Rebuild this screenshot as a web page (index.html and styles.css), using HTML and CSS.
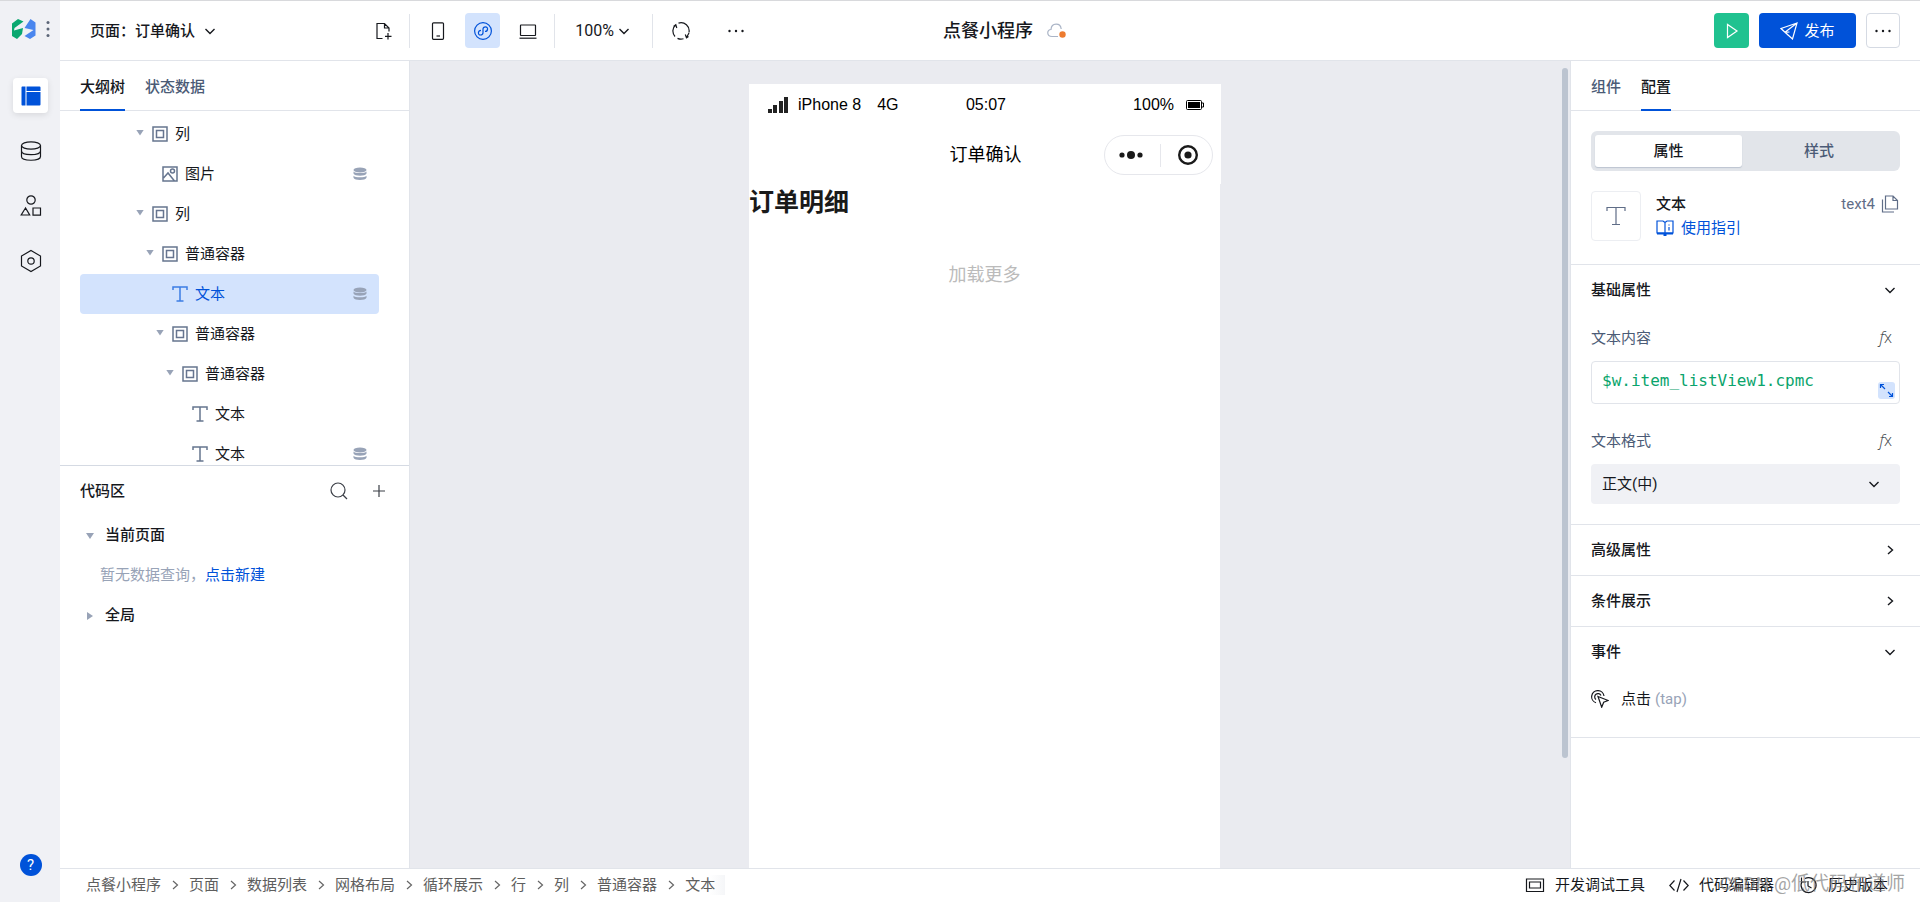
FILE: index.html
```html
<!DOCTYPE html>
<html lang="zh-CN">
<head>
<meta charset="utf-8">
<title>点餐小程序</title>
<link rel="stylesheet" href="styles.css">
</head>
<body>
<svg class="sprite" aria-hidden="true">
  <symbol id="i-down" viewBox="0 0 12 12"><path d="M1.5 4 6 8.5 10.500 4"/></symbol>
  <symbol id="i-right" viewBox="0 0 12 12"><path d="M4 2 8.500 6 4 10"/></symbol>
  <symbol id="i-box" viewBox="0 0 16 16"><path d="M1 1h14v14H1zM4.500 4.500h7v7h-7z"/></symbol>
  <symbol id="i-text" viewBox="0 0 16 16"><path d="M1 4V1h14v3M8 1v14M4.500 15h7"/></symbol>
  <symbol id="i-image" viewBox="0 0 16 16"><path d="M1 1h14v14H1zM1.500 12 6 7l6.500 8"/><circle cx="10.500" cy="5" r="2"/></symbol>
  <symbol id="i-data" viewBox="0 0 14 14"><g fill="currentColor" stroke="none"><ellipse cx="7" cy="3" rx="6.500" ry="2.500"/><path d="M.5 4.500C2 6.500 12 6.500 13.500 4.500v2c-1 3-12 3-13 0zM.5 8.700c1.500 2 11.500 2 13 0v2c-1 3-12 3-13 0z"/></g></symbol>
  <symbol id="i-more" viewBox="0 0 18 18"><g fill="currentColor" stroke="none"><circle cx="2.500" cy="9" r="1.200"/><circle cx="9" cy="9" r="1.200"/><circle cx="15.500" cy="9" r="1.200"/></g></symbol>
</svg>
<div class="app">
  <nav class="rail" aria-label="主导航">
    <div class="brand">
      <svg class="logo" viewBox="0 0 24 20"><path fill="#0aa870" d="M0 4.500 6 0l5.500 2.500L2.500 9l-.5 2.500 9-2.500-1 6-5 5L0 17z"/><path fill="#4a86ee" d="M18.500 0 23.500 3.500V16.500L18 20l-5.500-3 9-6-9-2z"/></svg>
      <svg class="grip" viewBox="0 0 4 18"><g fill="#5b6577"><circle cx="2" cy="2.500" r="1.500"/><circle cx="2" cy="9" r="1.500"/><circle cx="2" cy="15.500" r="1.500"/></g></svg>
    </div>
    <button class="rail-btn current" aria-label="页面"><svg class="i22" viewBox="0 0 22 22"><path fill="#0052d9" stroke="none" d="M2 1.500h3.500v19H2a1 1 0 0 1-.5-1v-17a1 1 0 0 1 .5-1z"/><path fill="#0052d9" stroke="none" d="M6.500 1.500h13a1 1 0 0 1 1 1V6h-14zM6.500 7h14v12.500a1 1 0 0 1-1 1h-13z"/></svg></button>
    <button class="rail-btn" aria-label="数据"><svg class="i22" viewBox="0 0 22 22"><ellipse cx="11" cy="5.500" rx="9.500" ry="3.700"/><path d="M1.500 5.500v11c0 5 19 5 19 0v-11M1.500 11c0 4.800 19 4.800 19 0"/></svg></button>
    <button class="rail-btn" aria-label="组件"><svg class="i22" viewBox="0 0 22 22"><circle cx="11" cy="5" r="4.200"/><path d="M5.500 13 1.200 20h8.500zM13 13h7.500v7.200H13z"/></svg></button>
    <button class="rail-btn" aria-label="设置"><svg class="i22 tall" viewBox="0 0 22 24"><path d="M11 1.500 20.500 7v10L11 22.500 1.500 17V7z"/><circle cx="11" cy="12" r="3.200"/></svg></button>
    <button class="help" aria-label="帮助">?</button>
  </nav>

  <div class="main">
    <header class="topbar">
      <button class="page-pick">页面：订单确认 <svg class="i12"><use href="#i-down"/></svg></button>
      <button class="tool add" aria-label="新建页面"><svg class="i18" viewBox="0 0 18 18"><path d="M7.500 16.500H2v-15h7.500L14 6v3.500M9.500 1.500V6H14M13 11v6.500M10 14.300h6.500"/></svg></button>
      <span class="rule"></span>
      <div class="devices">
        <button class="tool" aria-label="手机"><svg class="i18" viewBox="0 0 18 18"><rect x="3.500" y=".8" width="11" height="16.500" rx="1"/><path d="M7.500 14h3.500"/></svg></button>
        <button class="tool on" aria-label="小程序"><svg class="i18" viewBox="0 0 18 18"><circle cx="9" cy="9" r="8.400"/><path d="M7 8.300C3.800 8.300 3.500 13 6.500 13 8.200 13 9 12 9 10.800V7C9 5.800 9.800 4.800 11.500 4.800c3 0 2.700 4.500-.5 4.700"/></svg></button>
        <button class="tool" aria-label="电脑"><svg class="i18" viewBox="0 0 18 18"><rect x="1.500" y="3" width="15" height="10.500" rx=".5"/><path d="M.5 16.200h17"/></svg></button>
      </div>
      <span class="rule"></span>
      <button class="zoom">100% <svg class="i12"><use href="#i-down"/></svg></button>
      <span class="rule"></span>
      <button class="tool refresh" aria-label="刷新"><svg class="i18" viewBox="0 0 18 18"><path d="M6.500 1.100a8.200 8.200 0 0 1 10.500 9.400M11.500 16.800A8.200 8.200 0 0 1 5.500 16.400M3 14.500A8.200 8.200 0 0 1 3.500 3M1.500 4.500 3.800 2.800l1 3.200M16.500 14.500 14.500 15.800l-1.200-3.300M14.500 15.500 17 11"/></svg></button>
      <button class="tool" aria-label="更多"><svg class="i18"><use href="#i-more"/></svg></button>
      <div class="doc"><h1>点餐小程序</h1>
        <svg class="cloud" viewBox="0 0 20 16"><path d="M11 13.500H5C-.5 13.500-.5 6.500 4 6.500 4.500-.5 13.500-.5 14.200 6" stroke="#aab4c6"/><circle cx="15.500" cy="11.500" r="3.200" fill="#ed7b2f" stroke="none"/></svg></div>
      <div class="actions">
        <button class="run" aria-label="运行"><svg class="i18" viewBox="0 0 18 18"><path d="M4.500 2.500v13L14 9z"/></svg></button>
        <button class="publish"><svg class="i18" viewBox="0 0 18 18"><path d="M17 1 1 6.500l4 3.800L12.500 17zM17 1 5 10.300M5 10.300l4.500-.3M5.500 10.500l3 3"/></svg>发布</button>
        <button class="extra" aria-label="更多操作"><svg class="i18"><use href="#i-more"/></svg></button>
      </div>
    </header>

    <div class="work">
      <aside class="left">
        <div class="tabs"><button class="tab sel">大纲树</button><button class="tab">状态数据</button></div>
        <ul class="tree">
          <li class="row l1"><i class="tri"></i><svg class="i16"><use href="#i-box"/></svg>列</li>
          <li class="row l2"><i class="tri none"></i><svg class="i16"><use href="#i-image"/></svg>图片<svg class="bound"><use href="#i-data"/></svg></li>
          <li class="row l1"><i class="tri"></i><svg class="i16"><use href="#i-box"/></svg>列</li>
          <li class="row l2"><i class="tri"></i><svg class="i16"><use href="#i-box"/></svg>普通容器</li>
          <li class="row l3 picked"><i class="tri none"></i><svg class="i16"><use href="#i-text"/></svg>文本<svg class="bound"><use href="#i-data"/></svg></li>
          <li class="row l3"><i class="tri"></i><svg class="i16"><use href="#i-box"/></svg>普通容器</li>
          <li class="row l4"><i class="tri"></i><svg class="i16"><use href="#i-box"/></svg>普通容器</li>
          <li class="row l5"><i class="tri none"></i><svg class="i16"><use href="#i-text"/></svg>文本</li>
          <li class="row l5"><i class="tri none"></i><svg class="i16"><use href="#i-text"/></svg>文本<svg class="bound"><use href="#i-data"/></svg></li>
        </ul>
        <section class="code">
          <div class="code-head"><h2>代码区</h2>
            <button class="tool" aria-label="搜索"><svg class="i18" viewBox="0 0 18 18"><circle cx="8" cy="8" r="7"/><path d="m13 13 4 4"/></svg></button>
            <button class="tool" aria-label="新增"><svg class="i18" viewBox="0 0 18 18"><path d="M9 3v12M3 9h12"/></svg></button></div>
          <div class="group"><i class="tri"></i>当前页面</div>
          <p class="empty">暂无数据查询，<a href="#new">点击新建</a></p>
          <div class="group"><i class="tri shut"></i>全局</div>
        </section>
      </aside>

      <main class="canvas">
        <div class="phone">
          <div class="phone-top">
            <div class="status">
              <span class="net"><svg class="signal" viewBox="0 0 20 16"><path fill="#222" stroke="none" d="M0 12h4v4H0zM5 8h4v8H5zM11 4h4v12h-4zM16 0h4v16h-4z"/></svg>iPhone 8<span class="carrier">4G</span></span>
              <span>05:07</span>
              <span class="power">100%<svg class="battery" viewBox="0 0 18 10"><rect x=".5" y=".5" width="15" height="9" rx="1" stroke="#000"/><path d="M2 2h12v6H2z" fill="#000" stroke="none"/><path d="M16 3h1.500v4H16" stroke="#000"/></svg></span>
            </div>
            <div class="navbar"><span></span><span class="nav-title">订单确认</span>
              <span class="capsule"><svg viewBox="0 0 24 10" class="c-dots"><g fill="#1a1a1a" stroke="none"><circle cx="3" cy="5" r="2.600"/><circle cx="12" cy="5" r="4"/><circle cx="21" cy="5" r="2.600"/></g></svg><svg viewBox="0 0 20 20" class="c-close"><circle cx="10" cy="10" r="8.800" stroke="#1a1a1a" stroke-width="2.400"/><circle cx="10" cy="10" r="3.600" fill="#1a1a1a" stroke="none"/></svg></span></div>
          </div>
          <div class="phone-body"><h2>订单明细</h2><p>加载更多</p></div>
        </div>
        <div class="scroll"></div>
      </main>

      <aside class="right">
        <div class="tabs"><button class="tab">组件</button><button class="tab sel">配置</button></div>
        <div class="intro">
          <div class="segment"><button class="on">属性</button><button>样式</button></div>
          <div class="comp">
            <div class="thumb"><svg class="i20" viewBox="0 0 20 20"><path d="M1 5V1.500h18V5M10 1.500v17M6 18.500h8"/></svg></div>
            <div class="comp-name"><strong>文本</strong><a href="#guide"><svg class="i18" viewBox="0 0 18 18"><path d="M1 2h6l2 1.500L11 2h6v12H1zM9 3.500V14M13 5.500v1M13 8v3.500"/><path d="M1 14.500h16M7.500 16h3" stroke-width="2"/></svg>使用指引</a></div>
            <div class="comp-id">text4<button class="bare" aria-label="复制"><svg class="i18" viewBox="0 0 18 18"><path d="M4.500 1h7.500l4.500 4.500V14h-12zM12 1v4.500h4.500M1.500 4.500V17H13"/></svg></button></div>
          </div>
        </div>
        <section class="block basic">
          <button class="block-head">基础属性<svg class="i12"><use href="#i-down"/></svg></button>
          <div class="field"><label for="content">文本内容</label><button class="fx" aria-label="表达式"><i>f</i>x</button></div>
          <div class="expr"><input id="content" type="text" value="$w.item_listView1.cpmc"><button class="expand" aria-label="展开"><svg viewBox="0 0 17 17"><path d="M2.500 2.500 7 7M2.500 6V2.500H6M10 10l4.500 4.500M14.500 11v3.500H11"/></svg></button></div>
          <div class="field second"><label for="format">文本格式</label><button class="fx" aria-label="表达式"><i>f</i>x</button></div>
          <div class="pick"><select id="format"><option>正文(中)</option></select><svg class="i12"><use href="#i-down"/></svg></div>
        </section>
        <section class="block"><button class="block-head">高级属性<svg class="i12"><use href="#i-right"/></svg></button></section>
        <section class="block"><button class="block-head">条件展示<svg class="i12"><use href="#i-right"/></svg></button></section>
        <section class="block events"><button class="block-head">事件<svg class="i12"><use href="#i-down"/></svg></button>
          <div class="event"><svg class="i18" viewBox="0 0 18 18"><path d="M13 6A6.200 6.200 0 1 0 5 12.700M10 5.500A3.300 3.300 0 1 0 5 9.500M7 6.500 17.200 10.500l-4.500 1.700-2 5z"/></svg>点击 <span>(tap)</span></div></section>
      </aside>
    </div>

    <footer class="bottom">
      <nav class="crumbs" aria-label="路径"><a href="#1">点餐小程序</a><svg class="i12"><use href="#i-right"/></svg><a href="#2">页面</a><svg class="i12"><use href="#i-right"/></svg><a href="#3">数据列表</a><svg class="i12"><use href="#i-right"/></svg><a href="#4">网格布局</a><svg class="i12"><use href="#i-right"/></svg><a href="#5">循环展示</a><svg class="i12"><use href="#i-right"/></svg><a href="#6">行</a><svg class="i12"><use href="#i-right"/></svg><a href="#7">列</a><svg class="i12"><use href="#i-right"/></svg><a href="#8">普通容器</a><svg class="i12"><use href="#i-right"/></svg><a href="#9" class="last">文本</a></nav>
      <div class="utils">
        <button><svg class="i20" viewBox="0 0 20 20"><path d="M1.500 4h17v12.500h-17zM4.500 7h11v6h-11z"/></svg>开发调试工具</button>
        <button><svg class="i20" viewBox="0 0 20 20"><path d="M5.500 5.500.8 10.500l4.700 5M14.500 5.500l4.700 5-4.700 5M12 4 8 17"/></svg>代码编辑器</button>
        <button><svg class="i20" viewBox="0 0 20 20"><path d="M4 6.500a7.500 7.500 0 1 0 3-3M3.500 2.500v4.500H8M10 6v5l3.500 2"/></svg>历史版本</button>
      </div>
      <span class="mark">CSDN @低代码布道师</span>
    </footer>
  </div>
</div>
</body>
</html>
```

FILE: styles.css
```css
* { box-sizing: border-box; }
body { margin: 0; font: 15px/20px Roboto, "Noto Sans CJK SC", sans-serif; color: #16181d; background: #fff; }
h1, h2, p, ul { margin: 0; padding: 0; }
button, input, select { font: inherit; color: inherit; }
button { border: 0; padding: 0; background: none; display: flex; align-items: center; justify-content: center; cursor: pointer; }
a { color: #0052d9; text-decoration: none; }
svg { fill: none; stroke: currentColor; stroke-width: 1.2; flex: none; display: block; }
.sprite { position: absolute; width: 0; height: 0; }
.i12 { width: 12px; height: 12px; stroke-width: 1.4; }
.i16 { width: 16px; height: 16px; stroke-width: 1.5; }
.i18 { width: 18px; height: 18px; }
.i20 { width: 20px; height: 20px; }
.i22 { width: 22px; height: 22px; }
.i22.tall { height: 24px; }

.app { display: flex; height: 100vh; border-top: 1px solid #d8d9dc; }
.rail { width: 60px; background: #f0f1f5; display: flex; flex-direction: column; align-items: center; padding: 17px 0 26px 1px; }
.brand { display: flex; gap: 10px; align-items: center; height: 22px; margin-bottom: 38px; }
.logo { width: 24px; height: 20px; stroke: none; }
.grip { width: 4px; height: 18px; stroke: none; }
.rail-btn { width: 35px; height: 35px; margin-bottom: 20px; border-radius: 4px; }
.rail-btn.current { background: #fff; box-shadow: 0 2px 6px #0000001a; }
.help { width: 22px; height: 22px; margin-top: auto; border-radius: 50%; background: #0052d9; color: #fff; }

.main { flex: 1; min-width: 0; display: flex; flex-direction: column; }
.topbar { position: relative; height: 60px; border-bottom: 1px solid #e1e4ea; display: flex; align-items: center; padding: 0 20px 0 30px; }
.page-pick { font-weight: 500; gap: 9px; }
.tool { width: 35px; height: 35px; border-radius: 4px; }
.tool.on { background: #d3e3fd; color: #0052d9; }
.add { margin: 0 8px 0 150px; }
.rule { width: 1px; height: 34px; background: #e1e4ea; }
.devices { display: flex; gap: 10px; padding: 0 9px 0 10px; }
.zoom { width: 97px; gap: 4px; font-size: 16px; padding-right: 2px; }
.refresh { margin: 0 20px 0 10px; }
.doc { position: absolute; left: 50%; display: flex; align-items: center; gap: 14px; transform: translateX(-47px); }
.doc h1 { font-size: 18px; line-height: 24px; font-weight: 500; }
.cloud { width: 20px; height: 16px; }
.actions { margin-left: auto; display: flex; gap: 10px; }
.actions button { height: 35px; border-radius: 4px; }
.run { width: 35px; background: #20c290; color: #fff; }
.publish { width: 97px; background: #0052d9; color: #fff; gap: 6px; }
.extra { width: 34px; border: 1px solid #d5dae3; }

.work { flex: 1; min-height: 0; display: flex; }
.left { width: 350px; border-right: 1px solid #e1e4ea; display: flex; flex-direction: column; }
.tabs { display: flex; gap: 20px; height: 50px; padding: 0 20px; border-bottom: 1px solid #e1e4ea; flex: none; }
.tab { font-weight: 500; color: #4b5b76; height: 50px; padding-top: 4px; border-bottom: 2px solid transparent; }
.tab.sel { color: #16181d; border-color: #0052d9; }
.tree { list-style: none; height: 354px; padding: 3px 30px 0 20px; overflow: hidden; }
.row { height: 40px; display: flex; align-items: center; gap: 7px; border-radius: 4px; padding-right: 12px; }
.row .i16 { color: #66758f; }
.row.picked { background: #d3e3fd; color: #0052d9; }
.row.picked .i16 { color: #3d7de4; }
.l1 { padding-left: 56px; }
.l2 { padding-left: 66px; }
.l3 { padding-left: 76px; }
.l4 { padding-left: 86px; }
.l5 { padding-left: 96px; }
.tri { width: 8px; height: 6px; background: #98a3b7; clip-path: polygon(0 0, 100% 0, 50% 100%); margin-right: 1px; margin-bottom: 3px; }
.tri.none { visibility: hidden; }
.tri.shut { width: 6px; height: 8px; clip-path: polygon(0 0, 100% 50%, 0 100%); margin-left: 1px; margin-right: 2px; }
.bound { width: 14px; height: 14px; margin-left: auto; color: #98a3b7; }
.code { flex: 1; border-top: 1px solid #d5dae3; }
.code-head { display: flex; align-items: center; height: 49px; padding: 0 13px 0 20px; gap: 5px; }
.code-head h2 { font-size: 15px; font-weight: 500; line-height: 20px; margin-right: auto; }
.code-head .tool { color: #3b3f47; }
.group { display: flex; align-items: center; height: 40px; padding-left: 26px; gap: 10px; font-weight: 500; }
.group .tri { margin-bottom: 0; margin-top: 2px; }
.empty { height: 40px; line-height: 40px; padding-left: 40px; color: #98a3b7; }

.canvas { flex: 1; min-width: 0; background: #eaebf0; display: flex; justify-content: center; position: relative; padding: 23px 10px 0 0; }
.phone { width: 472px; display: flex; flex-direction: column; }
.phone-top { height: 100px; background: #fff; }
.status { height: 42px; padding: 0 17px 0 19px; display: grid; grid-template-columns: 1fr auto 1fr; align-items: center; font: 16px/20px "Liberation Sans", sans-serif; color: #000; }
.net, .power { display: flex; align-items: center; gap: 12px; }
.net { gap: 10px; }
.carrier { margin-left: 6px; }
.power { justify-content: flex-end; }
.signal { width: 20px; height: 16px; }
.battery { width: 18px; height: 10px; stroke-width: 1; }
.navbar { height: 58px; padding: 0 8px 0 9px; display: grid; grid-template-columns: 1fr auto 1fr; align-items: center; color: #000; }
.nav-title { font-size: 18px; line-height: 24px; }
.capsule { justify-self: end; width: 109px; height: 40px; border: 1px solid #e6e7ec; border-radius: 20px; display: flex; align-items: center; justify-content: space-between; padding: 0 14px; background: linear-gradient(#e6e7ec, #e6e7ec) 55px center / 1px 23px no-repeat; }
.c-dots { width: 24px; height: 10px; }
.c-close { width: 20px; height: 20px; }
.phone-body { flex: 1; background: #fff; margin-right: 1px; }
.phone-body h2 { padding-top: 1px; font-size: 25px; line-height: 36px; font-weight: 700; color: #1a1a1a; }
.phone-body p { margin-top: 42px; text-align: center; font-size: 18px; line-height: 24px; color: #bbb; }
.scroll { position: absolute; right: 2px; top: 7px; width: 6px; height: 690px; border-radius: 3px; background: #bcc4d0; }

.right { width: 350px; border-left: 1px solid #e1e4ea; }
.intro { padding: 20px 20px 23px; border-bottom: 1px solid #e1e4ea; }
.segment { display: grid; grid-template-columns: 147px 1fr; height: 40px; padding: 4px; border-radius: 6px; background: #e2e5ea; }
.segment button { border-radius: 3px; font-weight: 500; color: #4b5b76; }
.segment .on { background: #fff; color: #16181d; box-shadow: 0 1px 1px #98a3b780; }
.comp { display: flex; margin-top: 20px; }
.thumb { width: 50px; height: 50px; border: 1px solid #eceef2; border-radius: 4px; display: grid; place-items: center; color: #5f6d87; }
.comp-name { margin-left: 15px; display: flex; flex-direction: column; gap: 4px; padding-top: 3px; }
.comp-name strong { font-weight: 500; }
.comp-name a { display: flex; align-items: center; gap: 7px; }
.comp-id { margin-left: auto; display: flex; align-items: center; gap: 6px; height: 26px; padding-right: 1px; color: #5f6d87; font-size: 15px; }
.block { border-bottom: 1px solid #e1e4ea; padding: 0 20px; }
.block-head { width: 100%; height: 50px; justify-content: space-between; font-weight: 500; padding-right: 4px; }
.basic { padding-bottom: 20px; }
.field { display: flex; align-items: center; justify-content: space-between; height: 20px; margin: 13px 0; padding-right: 8px; color: #4b5b76; }
.field.second { margin: 27px 0 13px; }
.fx { font: 16px/20px "Open Sans", sans-serif; font-weight: 300; color: #3b3f47; padding-bottom: 2px; }
.expr { position: relative; }
.expr input { display: block; width: 100%; height: 43px; padding: 0 30px 4px 10px; border: 1px solid #e1e4ea; border-radius: 4px; font: 16px/20px "DejaVu Sans Mono", monospace; color: #0aa46c; background: #fff; }
.expand { position: absolute; right: 5px; bottom: 5px; width: 17px; height: 17px; border-radius: 3px; background: #d3e3fd; color: #0052d9; }
.expand svg { width: 17px; height: 17px; }
.pick { position: relative; }
.pick select { appearance: none; display: block; width: 100%; height: 40px; padding: 0 40px 0 11px; border: 0; border-radius: 4px; background: #f0f1f5; }
.pick svg { position: absolute; right: 20px; top: 14px; pointer-events: none; }
.events { padding-bottom: 28px; }
.event { display: flex; align-items: center; gap: 12px; height: 20px; margin-top: 12px; color: #16181d; }
.event span { color: #98a3b7; margin-left: -8px; font-size: 15px; }

.bottom { position: relative; height: 34px; border-top: 1px solid #e1e4ea; display: flex; align-items: center; justify-content: space-between; padding: 0 32px 2px 26px; flex: none; }
.crumbs { display: flex; align-items: center; gap: 8px; }
.crumbs svg { stroke-width: 1.2; color: #666; }
.crumbs a { color: #5e5e5e; }
.crumbs .last { padding-right: 10px; background: linear-gradient(90deg, #fff 60%, #f5f6f8); }
.utils { display: flex; gap: 24px; }
.utils button { gap: 10px; }
.mark { position: absolute; right: 15px; top: 2px; font-size: 19px; line-height: 26px; color: #777a; pointer-events: none; }
```
